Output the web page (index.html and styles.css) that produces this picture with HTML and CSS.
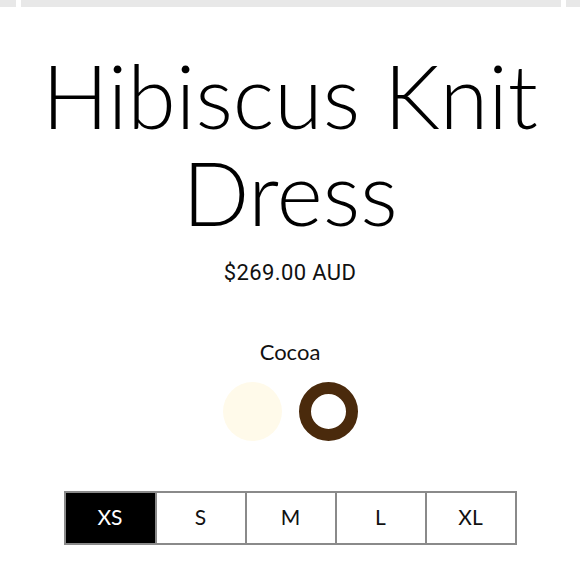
FILE: index.html
```html
<!DOCTYPE html>
<html>
<head>
<meta charset="utf-8">
<link rel="stylesheet" href="styles.css">
</head>
<body>
<div class="thumbs">
  <div class="thumb"></div>
  <div class="thumb"></div>
  <div class="thumb"></div>
</div>
<main class="product">
  <h1 class="title">Hibiscus Knit Dress</h1>
  <div class="price">$269.00 AUD</div>
  <div class="colour-name">Cocoa</div>
  <div class="swatches">
    <span class="swatch swatch-cream"></span>
    <span class="swatch swatch-cocoa"></span>
  </div>
  <div class="sizes">
    <button class="size active">XS</button>
    <button class="size">S</button>
    <button class="size">M</button>
    <button class="size">L</button>
    <button class="size">XL</button>
  </div>
</main>
</body>
</html>
```
FILE: styles.css
```css
html, body { margin: 0; padding: 0; background: #fff; }
body { width: 580px; height: 580px; overflow: hidden; font-family: Lato, "Liberation Sans", sans-serif; color: #111; }
.thumbs { display: grid; grid-template-columns: 16px 540px 1fr; gap: 5px; height: 7px; }
.thumb { background: #e8e8e8; }
.product { display: flex; flex-direction: column; align-items: center; }
.title { margin: 40px 0 0; font-family: Lato, sans-serif; font-weight: 300; font-size: 88px; line-height: 97px; text-align: center; color: #000; letter-spacing: 0; }
.price { margin-top: 19px; font-family: Roboto, sans-serif; font-size: 22px; line-height: 26px; letter-spacing: 0.4px; color: #111; }
.colour-name { margin-top: 53px; font-family: Lato, sans-serif; font-size: 22px; line-height: 26px; color: #111; }
.swatches { display: flex; gap: 17px; margin-top: 17px; }
.swatch { width: 59px; height: 59px; border-radius: 50%; box-sizing: border-box; display: block; }
.swatch-cream { background: #fffaea; }
.swatch-cocoa { background: #fff; border: 12px solid #4a2a0c; }
.sizes { display: flex; margin-top: 50px; border: 2px solid #8a8a8a; }
.size { width: 90px; height: 50px; box-sizing: border-box; border: 0; border-left: 2px solid #8a8a8a; background: #fff; font-family: Lato, sans-serif; font-size: 21px; color: #111; padding: 0 0 3px; }
.size:first-child { border-left: 0; width: 89px; }
.size.active { background: #000; color: #fff; }
```
